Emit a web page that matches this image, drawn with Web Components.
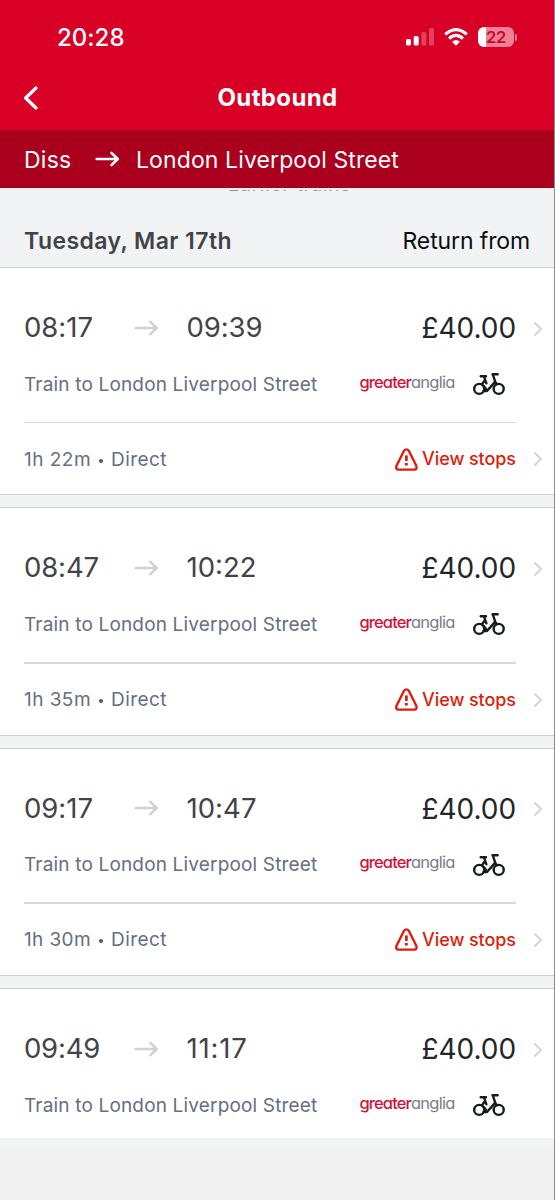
<!DOCTYPE html>
<html lang="en"><head><meta charset="utf-8"><title>Outbound</title>
<style>
html,body{margin:0;background:#f0f0f0}
body{width:555px;height:1200px;overflow:hidden;font-family:Inter,"Liberation Sans",sans-serif;font-optical-sizing:none}
</style></head><body>
<train-app></train-app>
<script>
const define=(name,html,setup)=>customElements.define(name,class extends HTMLElement{
  connectedCallback(){
    if(this.shadowRoot)return;
    const t=document.createElement('template');
    t.innerHTML=typeof html==='function'?html(this):html;
    this.attachShadow({mode:'open'}).append(t.content.cloneNode(true));
    if(setup)setup(this);
  }
});

/* Text tracked so that its line takes the given width */
define('fit-text','<style>:host{display:inline-block;white-space:nowrap;justify-self:start}</style><slot></slot>',el=>{
  const w=+el.getAttribute('w'),n=el.textContent.length;
  if(!n)return;
  const d=(w-el.getBoundingClientRect().width)/n;
  el.style.letterSpacing=d.toFixed(3)+'px';
});

define('arrow-icon',`<style>:host{display:block;width:25px;height:18px}svg{display:block}</style>
<svg width="25" height="18" viewBox="0 0 25 18" fill="none" stroke="currentColor" stroke-width="2.6" stroke-linecap="round" stroke-linejoin="round"><path d="M1.7 9H22.7M16.4 2.9L22.8 9L16.4 15.1"/></svg>`);

define('chevron-icon',`<style>:host{display:block;width:10px;height:16px;color:#d3d4d6;margin-top:2px}svg{display:block}</style>
<svg width="10" height="16" viewBox="0 0 10 16" fill="none" stroke="currentColor" stroke-width="1.8"><path d="M1.4 1.5L8 8L1.4 14.5"/></svg>`);

define('bike-icon',`<style>:host{display:block;width:32px;height:24px;margin:1px 0 0 1px}svg{display:block}</style>
<svg width="32" height="24" viewBox="0 0 32 24" fill="none" stroke="#151c1e" stroke-width="2.4" stroke-linecap="round" stroke-linejoin="round"><circle cx="6.2" cy="16.9" r="5"/><circle cx="25.7" cy="16.9" r="5"/><path d="M7.7 4.2H13M10.9 4.4L13.4 11.3M9 12.2L11.5 8.8M10.5 19L14 19L22.3 9.6M10.8 14L14 18.5M19.5 2.2H24.7M19.8 2.4L22.2 9.6L23.9 12.3"/></svg>`);

define('warning-icon',`<style>:host{display:block;width:23px;height:23px;margin-top:2px}svg{display:block}</style>
<svg width="23" height="23" viewBox="0 0 23 23" fill="none" stroke="#dc1e0a" stroke-width="2.4" stroke-linejoin="round" stroke-linecap="round"><path d="M9 2.8Q11.4 0 13.8 2.8L21.3 17.8Q22.4 21.4 19.2 21.6H3.6Q.4 21.4 1.5 17.8Z"/><path d="M11.4 7.4V13" stroke-width="2.7" stroke-linecap="butt"/><path d="M11.4 15V17.5" stroke-width="2.8" stroke-linecap="butt"/></svg>`);

define('status-bar',`<style>
:host{display:flex;height:74px;box-sizing:border-box;padding:0 37px 0 57px;align-items:center;justify-content:space-between;color:#fff}
.time{font-size:24px;font-weight:500;line-height:30px;margin-top:2px}
.icons{display:flex;align-items:center;gap:10px}
svg{display:block}
.bat{display:flex;align-items:center;gap:1px}
.cell{width:36px;height:20px;border-radius:6px;background:linear-gradient(90deg,#fff 8px,#f08095 8px);display:flex;align-items:center;justify-content:center;color:#c30b30;font-size:16.5px;font-weight:600;line-height:20px}
.tip{width:2px;height:7px;border-radius:0 3px 3px 0;background:#f08095}
</style>
<fit-text class="time" w="67.5">20:28</fit-text>
<div class="icons">
<svg width="28" height="18" viewBox="0 0 28 18" fill="#fff"><rect y="11" width="5" height="6.5" rx="1.5"/><rect x="7.7" y="8" width="5" height="9.5" rx="1.5"/><g opacity=".25"><rect x="15.4" y="4" width="5" height="13.5" rx="1.5"/><rect x="23" y="0" width="5" height="17.5" rx="1.5"/></g></svg>
<svg width="24" height="18" viewBox="0 0 24 18" fill="none" stroke="#fff" stroke-width="3.1"><path d="M1.2 6.4Q12-3.2 22.8 6.4"/><path d="M5 10.7Q12 4.2 19 10.7"/><path d="M8 13.7Q12 10.5 16 13.7L12 17.7Z" fill="#fff" stroke="none"/></svg>
<div class="bat"><div class="cell"><fit-text w="20">22</fit-text></div><div class="tip"></div></div>
</div>`);

define('nav-bar',el=>`<style>
:host{display:grid;grid-template-columns:48px 1fr 48px;height:56px;align-items:center;color:#fff}
svg{display:block;margin:-8px 0 0 22px}
.t{justify-self:center;font-size:24px;font-weight:700;line-height:30px;margin:-9px 0 0 1px}
</style>
<svg width="16" height="24" viewBox="0 0 16 24" fill="none" stroke="#fff" stroke-width="3.2" stroke-linecap="round" stroke-linejoin="round"><path d="M14 2L3.6 12L14 22"/></svg>
<fit-text class="t" w="120">${el.getAttribute('title')}</fit-text><span></span>`);

define('route-bar',`<style>
:host{display:grid;grid-template-columns:71px 41px 1fr;height:58px;padding-left:24px;align-items:center;background:#aa001e;color:#fff;font-size:23px;line-height:30px}
fit-text{margin-top:1px}
</style><fit-text w="47.5">Diss</fit-text><arrow-icon></arrow-icon><fit-text w="263">London Liverpool Street</fit-text>`);

define('date-header',`<style>
:host{display:block;height:79px;box-sizing:border-box;border-top:2px solid #faeff1;background:#f2f3f5}
.early{height:2px;overflow:hidden;display:flex;flex-direction:column;justify-content:flex-end;align-items:center;color:#8b8d91;font-size:19px}
.early fit-text{line-height:24px;flex:none;margin:0 0 -5px 25px}
.row{height:75px;display:flex;align-items:center;justify-content:space-between;padding:22px 24px 0;box-sizing:border-box}
.d{font-size:23px;font-weight:600;color:#424346;line-height:28px}
.r{font-size:23px;color:#0b0d10;line-height:28px}
</style><div class="early"><fit-text w="123">Earlier trains</fit-text></div>
<div class="row"><fit-text class="d" w="208">Tuesday, Mar 17th</fit-text><fit-text class="r" w="127.5">Return from</fit-text></div>`);

define('operator-logo',`<style>:host{display:block;font-size:16.5px;line-height:22px;font-feature-settings:"cv11";white-space:nowrap}
.g{color:#cf1338;font-weight:500}.a{color:#7b7e87}</style><fit-text class="g" w="51.5">greater</fit-text><fit-text class="a" w="43.5">anglia</fit-text>`);

define('train-card',el=>`<style>
:host{display:block;height:240.4px;background:#f2f3f5}
.card{background:#fff;border-top:1.4px solid #cfd0d2;border-bottom:1.4px solid #cfd0d2;height:228.4px;box-sizing:border-box;padding-top:31.6px;display:flow-root}
.times{display:grid;grid-template-columns:109.5px 53px 1fr auto 17px 21px;height:56px;padding-left:24px;align-items:center;color:#424346;font-size:27.5px;line-height:34px}
arrow-icon{color:#d0d1d3}
.times>fit-text{margin-top:-1px}
.times>.price{color:#242528;font-size:28px;margin-top:1px}
.info{display:grid;grid-template-columns:335px 1fr 82px;height:56px;padding-left:24px;align-items:center;font-size:19px;line-height:24px;color:#656e82;font-weight:430}
.info fit-text{margin-top:2px}
operator-logo{margin:-4px 0 0 .5px}
.rule{height:1.6px;background:#d7d8da;margin:10px 38px 0 24px}
.foot{display:grid;grid-template-columns:1fr auto auto 17px 21px;height:70px;padding-left:24px;align-items:center;font-size:19px;line-height:24px;color:#656e82;font-weight:430}
.foot .v{font-size:18px;font-weight:500;color:#dc1e0a;margin:2px 0 0 4px}
.sum{display:flex;align-items:center;gap:8px;padding-top:3px}
.dot{width:4px;height:4px;border-radius:50%;background:#515a6d;margin-top:2px}
</style><div class="card">
<div class="times"><fit-text w="${el.getAttribute('dw')}">${el.getAttribute('dep')}</fit-text><arrow-icon></arrow-icon><fit-text w="${el.getAttribute('aw')}">${el.getAttribute('arr')}</fit-text><fit-text class="price" w="94.5">£40.00</fit-text><span></span><chevron-icon></chevron-icon></div>
<div class="info"><fit-text w="293.5">Train to London Liverpool Street</fit-text><operator-logo></operator-logo><bike-icon></bike-icon></div>
${el.hasAttribute('dur')?`<div class="rule"></div><div class="foot"><div class="sum"><fit-text w="67">${el.getAttribute('dur')}</fit-text><span class="dot"></span><fit-text w="56">Direct</fit-text></div><warning-icon></warning-icon><fit-text class="v" w="94">View stops</fit-text><span></span><chevron-icon></chevron-icon></div>`:''}
</div>`);

define('train-app',`<style>
:host{display:flex;flex-direction:column;width:554px;height:1200px;border-right:1px solid #8a8b8d;box-sizing:content-box;background:#f0f0f0}
header{background:#d90026;height:130px}
main{height:950px;overflow:hidden}
.tail{height:12px;background:#f1f3f5}
</style>
<header><status-bar></status-bar><nav-bar title="Outbound"></nav-bar></header>
<route-bar></route-bar>
<main><date-header></date-header>
<train-card dep="08:17" dw="69" arr="09:39" aw="76" dur="1h 22m"></train-card>
<train-card dep="08:47" dw="75" arr="10:22" aw="70" dur="1h 35m"></train-card>
<train-card dep="09:17" dw="69" arr="10:47" aw="70" dur="1h 30m"></train-card>
<train-card dep="09:49" dw="76" arr="11:17" aw="61"></train-card>
</main><div class="tail"></div>`);
</script></body></html>
